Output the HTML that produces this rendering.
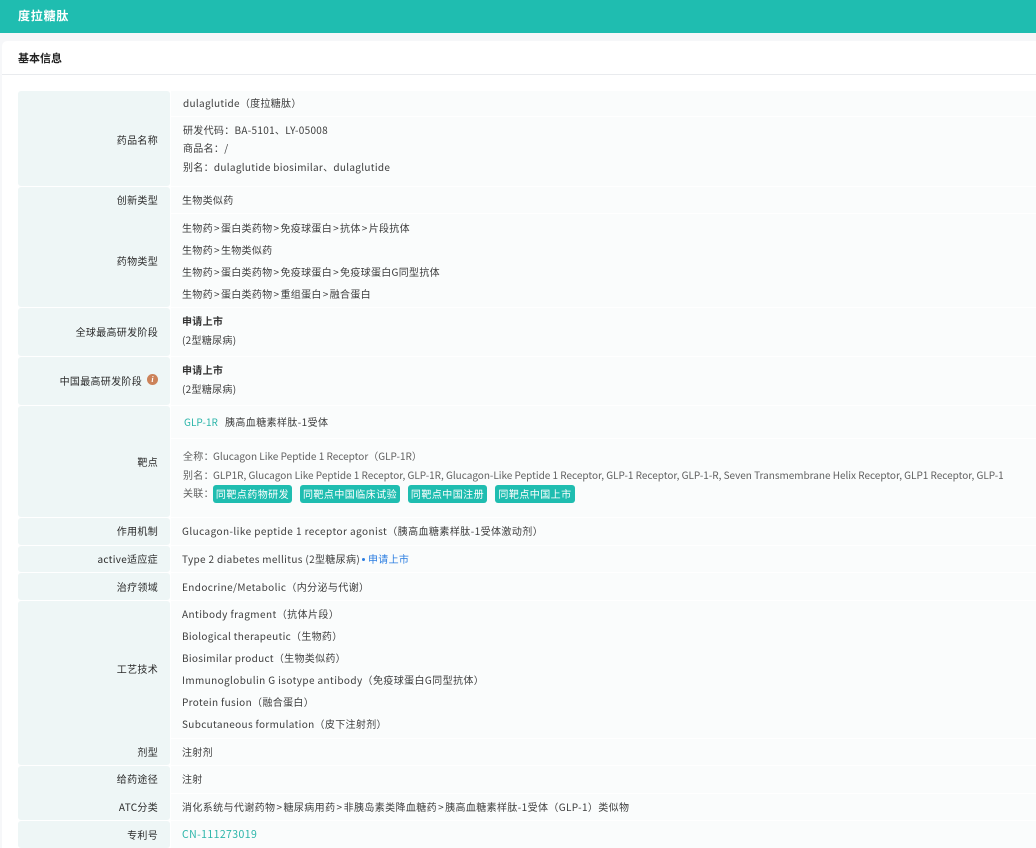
<!DOCTYPE html>
<html lang="zh"><head><meta charset="utf-8"><style>
html,body{margin:0;padding:0;width:1036px;height:848px;overflow:hidden;background:#f6f7f9}
body{position:relative;font-family:"Liberation Sans","Noto Sans CJK SC",sans-serif}
*{box-sizing:border-box}
.a{position:absolute}
.bar{left:0;top:0;width:1036px;height:33px;background:#1fbdb0}
.card{left:2px;top:41px;width:1034px;height:807px;background:#fff;border-top-left-radius:5px}
.hl{left:2px;top:74px;width:1034px;height:1px;background:#e9ebee}
.l{left:18px;width:152px;background:#eef6f6;border-radius:3px}
.v{left:171px;width:865px;background:#fafcfc}
.t{position:absolute;white-space:nowrap;font-size:10px;line-height:14px;height:14px;color:#3c3c3c;letter-spacing:.3px;font-family:"Noto Sans CJK SC",sans-serif}
.r{right:878px;color:#2a2a2a;text-align:right}
.g{color:#5f5f5f;letter-spacing:0}
.b{font-weight:700;color:#333}
.t i{font-style:normal;margin:0 1.1px}
.tag{position:absolute;height:18px;line-height:17px;background:#1fbdb0;color:#fff;border-radius:3px;font-size:10px;letter-spacing:.45px;text-align:center;white-space:nowrap;font-family:"Noto Sans CJK SC",sans-serif}
</style></head><body>
<div class="a bar"></div>
<div class="t" style="left:18px;top:8px;font-size:12px;line-height:16px;height:16px;color:#fff;font-weight:700;letter-spacing:.8px">度拉糖肽</div>
<div class="a card"></div><div class="a hl"></div>
<div class="t" style="left:18px;top:51px;font-size:11px;color:#222;font-weight:700;letter-spacing:0">基本信息</div>

<div class="a l" style="top:91px;height:95px"></div><div class="a v" style="top:91px;height:25px"></div><div class="a v" style="top:117px;height:69px"></div>
<div class="a l" style="top:187px;height:120px"></div><div class="a v" style="top:187px;height:26px"></div><div class="a v" style="top:214px;height:93px"></div>
<div class="a l" style="top:308px;height:48px"></div><div class="a v" style="top:308px;height:48px"></div>
<div class="a l" style="top:357px;height:48px"></div><div class="a v" style="top:357px;height:48px"></div>
<div class="a l" style="top:406px;height:111px"></div><div class="a v" style="top:406px;height:32px"></div><div class="a v" style="top:439px;height:78px"></div>
<div class="a l" style="top:518px;height:27px"></div><div class="a v" style="top:518px;height:27px"></div>
<div class="a l" style="top:546px;height:26px"></div><div class="a v" style="top:546px;height:26px"></div>
<div class="a l" style="top:573px;height:27px"></div><div class="a v" style="top:573px;height:27px"></div>
<div class="a l" style="top:601px;height:164px"></div><div class="a v" style="top:601px;height:137px"></div><div class="a v" style="top:739px;height:26px"></div>
<div class="a l" style="top:766px;height:54px"></div><div class="a v" style="top:766px;height:27px"></div><div class="a v" style="top:794px;height:26px"></div>
<div class="a l" style="top:821px;height:27px"></div><div class="a v" style="top:821px;height:27px"></div>

<div class="t r" style="top:133px">药品名称</div>
<div class="t" style="left:183px;top:96px">dulaglutide（度拉糖肽）</div>
<div class="t" style="left:183px;top:123px">研发代码：BA-5101、LY-05008</div>
<div class="t" style="left:183px;top:141px">商品名：/</div>
<div class="t" style="left:183px;top:160px">别名：dulaglutide biosimilar、dulaglutide</div>

<div class="t r" style="top:193px">创新类型</div>
<div class="t" style="left:182px;top:193px">生物类似药</div>

<div class="t r" style="top:254px">药物类型</div>
<div class="t" style="left:182px;top:221px">生物药<i>&gt;</i>蛋白类药物<i>&gt;</i>免疫球蛋白<i>&gt;</i>抗体<i>&gt;</i>片段抗体</div>
<div class="t" style="left:182px;top:243px">生物药<i>&gt;</i>生物类似药</div>
<div class="t" style="left:182px;top:265px">生物药<i>&gt;</i>蛋白类药物<i>&gt;</i>免疫球蛋白<i>&gt;</i>免疫球蛋白G同型抗体</div>
<div class="t" style="left:182px;top:287px">生物药<i>&gt;</i>蛋白类药物<i>&gt;</i>重组蛋白<i>&gt;</i>融合蛋白</div>

<div class="t r" style="top:325px">全球最高研发阶段</div>
<div class="t b" style="left:182px;top:314px">申请上市</div>
<div class="t" style="left:182px;top:333px">(2型糖尿病)</div>

<div class="t r" style="top:374px;right:894px">中国最高研发阶段</div>
<div class="a" style="left:147px;top:374px;width:11px;height:11px;border-radius:50%;background:#cc8259;color:#fff;font:italic 700 8px/11px 'Liberation Serif',serif;text-align:center">i</div>
<div class="t b" style="left:182px;top:363px">申请上市</div>
<div class="t" style="left:182px;top:382px">(2型糖尿病)</div>

<div class="t r" style="top:455px">靶点</div>
<div class="t" style="left:184px;top:415px;color:#2bb5a9;letter-spacing:.05px">GLP-1R</div>
<div class="t" style="left:225px;top:415px;letter-spacing:.4px">胰高血糖素样肽-1受体</div>
<div class="t g" style="left:183px;top:449px;letter-spacing:.3px">全称：</div>
<div class="t g" style="left:213px;top:449px">Glucagon Like Peptide 1 Receptor（GLP-1R）</div>
<div class="t g" style="left:183px;top:468px;letter-spacing:.3px">别名：</div>
<div class="t g" style="left:213px;top:468px;letter-spacing:-.018px">GLP1R, Glucagon Like Peptide 1 Receptor, GLP-1R, Glucagon-Like Peptide 1 Receptor, GLP-1 Receptor, GLP-1-R, Seven Transmembrane Helix Receptor, GLP1 Receptor, GLP-1</div>
<div class="t g" style="left:183px;top:486px;letter-spacing:.3px">关联：</div>
<div class="tag" style="left:213px;top:485px;width:79px">同靶点药物研发</div>
<div class="tag" style="left:300px;top:485px;width:100px">同靶点中国临床试验</div>
<div class="tag" style="left:408px;top:485px;width:79px">同靶点中国注册</div>
<div class="tag" style="left:495px;top:485px;width:80px">同靶点中国上市</div>

<div class="t r" style="top:524px">作用机制</div>
<div class="t" style="left:182px;top:524px;letter-spacing:.43px">Glucagon-like peptide 1 receptor agonist（胰高血糖素样肽-1受体激动剂）</div>

<div class="t r" style="top:552px">active适应症</div>
<div class="t" style="left:182px;top:552px;letter-spacing:.34px">Type 2 diabetes mellitus (2型糖尿病)</div>
<div class="a" style="left:362px;top:558px;width:3px;height:3px;background:#2a7de1;border-radius:50%"></div>
<div class="t" style="left:368px;top:552px;color:#2a7de1">申请上市</div>

<div class="t r" style="top:580px">治疗领域</div>
<div class="t" style="left:182px;top:580px;letter-spacing:.38px">Endocrine/Metabolic（内分泌与代谢）</div>

<div class="t r" style="top:662px">工艺技术</div>
<div class="t" style="left:182px;top:607px;letter-spacing:.43px">Antibody fragment（抗体片段）</div>
<div class="t" style="left:182px;top:629px">Biological therapeutic（生物药）</div>
<div class="t" style="left:182px;top:651px">Biosimilar product（生物类似药）</div>
<div class="t" style="left:182px;top:673px;letter-spacing:.39px">Immunoglobulin G isotype antibody（免疫球蛋白G同型抗体）</div>
<div class="t" style="left:182px;top:695px;letter-spacing:.35px">Protein fusion（融合蛋白）</div>
<div class="t" style="left:182px;top:717px;letter-spacing:.33px">Subcutaneous formulation（皮下注射剂）</div>

<div class="t r" style="top:745px">剂型</div>
<div class="t" style="left:182px;top:745px">注射剂</div>
<div class="t r" style="top:772px">给药途径</div>
<div class="t" style="left:182px;top:772px">注射</div>
<div class="t r" style="top:800px">ATC分类</div>
<div class="t" style="left:182px;top:800px;letter-spacing:.38px">消化系统与代谢药物<i>&gt;</i>糖尿病用药<i>&gt;</i>非胰岛素类降血糖药<i>&gt;</i>胰高血糖素样肽-1受体（GLP-1）类似物</div>
<div class="t r" style="top:828px">专利号</div>
<div class="t" style="left:182px;top:828px;color:#2bb5a9;font-size:10.5px;letter-spacing:.4px">CN-111273019</div>
</body></html>
